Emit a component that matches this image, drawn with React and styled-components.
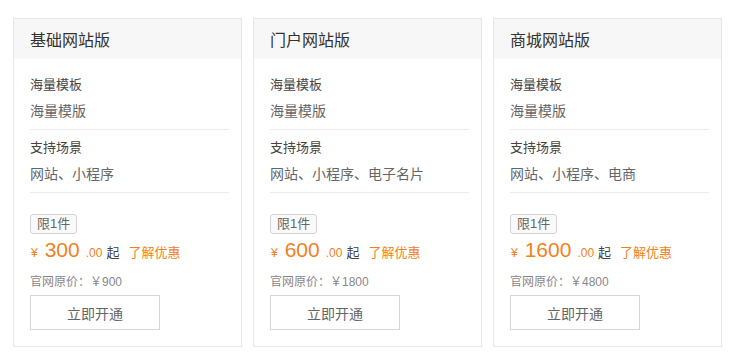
import React from "react";
import styled, { createGlobalStyle } from "styled-components";

const GlobalStyle = createGlobalStyle`
  body {
    margin: 0;
    background: #fff;
    font-family: "Liberation Sans", "Noto Sans CJK SC", sans-serif;
  }
`;

const Page = styled.div`
  display: flex;
  gap: 11px;
  padding: 18px 0 0 13px;
`;

const Card = styled.div`
  width: 229px;
  box-sizing: border-box;
  border: 1px solid #e6e6e6;
  background: #fff;
  padding-bottom: 16px;
`;

const Header = styled.div`
  height: 40px;
  display: flex;
  align-items: center;
  padding-left: 16px;
  background: #f7f7f7;
  font-size: 16px;
  color: #333;
`;

const Body = styled.div`
  padding: 16px 12px 0 16px;
`;

const Section = styled.div`
  padding-bottom: 8px;
  margin-bottom: 8px;
  border-bottom: 1px solid #ececec;
`;

const Label = styled.div`
  font-size: 13px;
  line-height: 20px;
  color: #444;
`;

const Value = styled.div`
  margin-top: 6px;
  font-size: 14px;
  line-height: 20px;
  color: #666;
`;

const Badge = styled.span`
  display: inline-block;
  margin-top: 13px;
  height: 18px;
  line-height: 18px;
  padding: 0 6px;
  border: 1px solid #d4d4d4;
  border-radius: 3px;
  background: #fafafa;
  font-size: 13px;
  color: #666;
`;

const PriceRow = styled.div`
  display: flex;
  align-items: baseline;
  margin-top: 4px;
  height: 32px;
  color: #f0821e;
`;

const Yen = styled.span`
  font-size: 12px;
  margin: 0 7px 0 1px;
`;

const Amount = styled.span`
  font-size: 21px;
  font-weight: 500;
`;

const Cents = styled.span`
  font-size: 12px;
  margin-left: 6px;
`;

const From = styled.span`
  font-size: 13px;
  color: #444;
  margin-left: 4px;
`;

const Discount = styled.span`
  font-size: 13px;
  margin-left: 9px;
`;

const Original = styled.div`
  margin-top: 4px;
  font-size: 12px;
  line-height: 16px;
  color: #888;
`;

const OpenButton = styled.button`
  display: block;
  margin-top: 5px;
  width: 130px;
  height: 35px;
  border: 1px solid #d6d6d6;
  background: #fff;
  font-family: inherit;
  font-size: 14px;
  color: #666;
  cursor: pointer;
`;

const plans = [
  { title: "基础网站版", scene: "网站、小程序", price: "300", original: "900" },
  { title: "门户网站版", scene: "网站、小程序、电子名片", price: "600", original: "1800" },
  { title: "商城网站版", scene: "网站、小程序、电商", price: "1600", original: "4800" },
];

const App = () => {
  return (
    <>
      <GlobalStyle />
      <Page>
        {plans.map((plan) => (
          <Card key={plan.title}>
            <Header>{plan.title}</Header>
            <Body>
              <Section>
                <Label>海量模板</Label>
                <Value>海量模版</Value>
              </Section>
              <Section>
                <Label>支持场景</Label>
                <Value>{plan.scene}</Value>
              </Section>
              <Badge>限1件</Badge>
              <PriceRow>
                <Yen>¥</Yen>
                <Amount>{plan.price}</Amount>
                <Cents>.00</Cents>
                <From>起</From>
                <Discount>了解优惠</Discount>
              </PriceRow>
              <Original>官网原价：￥{plan.original}</Original>
              <OpenButton>立即开通</OpenButton>
            </Body>
          </Card>
        ))}
      </Page>
    </>
  );
};

export default App;
